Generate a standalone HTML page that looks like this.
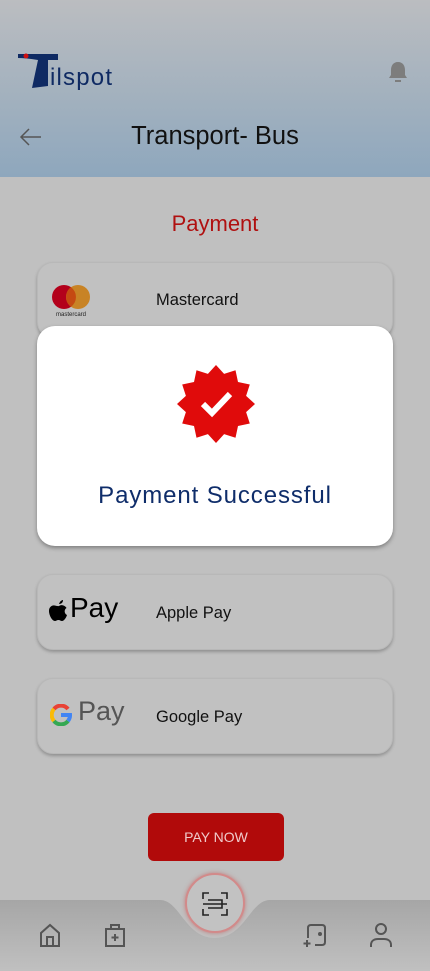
<!DOCTYPE html>
<html><head><meta charset="utf-8"><style>
*{margin:0;padding:0;box-sizing:border-box}
body{width:430px;height:971px;overflow:hidden;background:#c0c0c0;font-family:"Liberation Sans",sans-serif;position:relative}
.hdr{position:absolute;left:0;top:0;width:430px;height:177px;background:linear-gradient(#bbbdc0,#8ea7bd)}
.card{position:absolute;left:37px;width:356px;height:76px;border-radius:16px;background:#c1c1c1;box-shadow:0 2px 3px rgba(0,0,0,.25);border:1px solid #b8b8b8}
.card .t{position:absolute;left:118px;top:27px;font-size:16.5px;color:#111}
.modal{position:absolute;left:37px;top:326px;width:356px;height:220px;background:#fff;border-radius:18px;box-shadow:0 2px 4px rgba(0,0,0,.35)}
</style></head><body>
<div class="hdr"></div>
<svg style="position:absolute;left:18px;top:52px" width="100" height="38" viewBox="0 0 100 38">
<path d="M0 2 L40 2 L40 8 L30 8 L30 34 L14 36 L20 8 Q8 6 0 6Z" fill="#0f2a63"/>
<circle cx="8" cy="4" r="2.5" fill="#d01010"/>
<text x="32" y="33" font-family="Liberation Sans" font-size="24" fill="#0f2a63" textLength="62">ilspot</text>
</svg>
<svg style="position:absolute;left:387px;top:60px" width="22" height="24" viewBox="0 0 22 24"><path d="M11 2 C6 2 4 6 4 10 V15 L2 18 H20 L18 15 V10 C18 6 16 2 11 2Z M8 20 H14 V22 H8Z" fill="#7d7d7d"/></svg>
<svg style="position:absolute;left:19px;top:127px" width="24" height="20" viewBox="0 0 24 20"><path d="M22 10 H2 M10 2 L2 10 L10 18" stroke="#555" stroke-width="1.5" fill="none"/></svg>
<div style="position:absolute;left:0;width:430px;top:122px;text-align:center;font-size:25.5px;color:#111">Transport- Bus</div>
<div style="position:absolute;left:0;width:430px;top:211px;text-align:center;font-size:22px;color:#b01010">Payment</div>
<div class="card" style="top:262px">
<svg style="position:absolute;left:13px;top:22px" width="42" height="34" viewBox="0 0 42 34"><circle cx="13" cy="12" r="12" fill="#b3001b"/><circle cx="27" cy="12" r="12" fill="#c8801c" opacity=".95"/><path d="M20 2.3 A12 12 0 0 1 20 21.7 A12 12 0 0 1 20 2.3Z" fill="#c54a12"/><text x="20" y="31" font-size="6" text-anchor="middle" fill="#222">mastercard</text></svg>
<div class="t" style="top:28px">Mastercard</div></div>
<div class="modal">
<svg style="position:absolute;left:139px;top:38px" width="80" height="80" viewBox="-40 -40 80 80">
<polygon fill="#e00b0b" points="0,-39 8.1,-30.1 19.5,-33.8 22,-22 33.8,-19.5 30.1,-8.1 39,0 30.1,8.1 33.8,19.5 22,22 19.5,33.8 8.1,30.1 0,39 -8.1,30.1 -19.5,33.8 -22,22 -33.8,19.5 -30.1,8.1 -39,0 -30.1,-8.1 -33.8,-19.5 -22,-22 -19.5,-33.8 -8.1,-30.1"/>
<path d="M-13 0 L-4 9 L14 -10" stroke="#fff" stroke-width="6" fill="none"/></svg>
<div style="position:absolute;left:0;width:356px;top:156px;text-align:center;font-size:24px;color:#0f2d6a;letter-spacing:.9px">Payment Successful</div>
</div>
<div class="card" style="top:574px">
<svg style="position:absolute;left:11px;top:24px" width="20" height="23" viewBox="0 0 20 23"><path d="M10 5C11 2 13 1 14 1C14 3 13 5 10 5ZM10 7C11.5 6 13 6 14.5 6.5C16 7 17 8 17.5 9C15 10.5 15 14.5 18 16C17 19 15 22 13 22C11.5 22 11 21 9.5 21C8 21 7 22 6 22C3 22 0 16 0 12C0 8 3 6 5.5 6.5C7 6.5 8.5 7.5 10 7Z" fill="#000"/></svg>
<div style="position:absolute;left:32px;top:17px;font-size:28px;color:#000">Pay</div>
<div class="t" style="top:29px">Apple Pay</div></div>
<div class="card" style="top:678px">
<svg style="position:absolute;left:12px;top:25px" width="22" height="22" viewBox="0 0 22 22" fill="none" stroke-width="4"><path d="M18 5A9 9 0 0 0 4 5" stroke="#e94235"/><path d="M4 5A9 9 0 0 0 4 17" stroke="#fabb05"/><path d="M4 17A9 9 0 0 0 18 17" stroke="#34a853"/><path d="M18 17A9 9 0 0 0 20 11H11" stroke="#4285f4"/></svg>
<div style="position:absolute;left:40px;top:17px;font-size:27px;color:#555">Pay</div>
<div class="t" style="top:29px">Google Pay</div></div>
<div style="position:absolute;left:148px;top:813px;width:136px;height:48px;background:#b10a0a;border-radius:6px;color:#f0caca;font-size:14px;text-align:center;line-height:48px">PAY NOW</div>
<svg style="position:absolute;left:0;top:898px" width="430" height="73" viewBox="0 0 430 73"><defs><linearGradient id="g" x1="0" y1="0" x2="0" y2="1"><stop offset="0" stop-color="#a6a6a6"/><stop offset="1" stop-color="#c0c0c0"/></linearGradient></defs><path d="M0 2 H160 C180 2 185 40 215 40 C245 40 250 2 270 2 H430 V73 H0Z" fill="url(#g)"/></svg>
<div style="position:absolute;left:185px;top:873px;width:60px;height:60px;border-radius:50%;background:#c2c2c2;border:2px solid #d28a8a;box-shadow:0 0 4px rgba(200,60,60,.5)"></div>
<svg style="position:absolute;left:202px;top:892px" width="26" height="24" viewBox="0 0 26 24" fill="none" stroke="#222" stroke-width="1.6"><path d="M1 7V1H7M19 1H25V7M25 17V23H19M7 23H1V17M1 12H25M6 8H20V16H6"/></svg>
<svg style="position:absolute;left:38px;top:922px" width="24" height="26" viewBox="0 0 24 26" fill="none" stroke="#555" stroke-width="2"><path d="M3 24V11L12 3L21 11V24ZM9 24V15H15V24"/></svg>
<svg style="position:absolute;left:103px;top:922px" width="24" height="26" viewBox="0 0 24 26" fill="none" stroke="#555" stroke-width="2"><path d="M3 7H21V24H3ZM8 7V3H16V7M12 12V19M8.5 15.5H15.5"/></svg>
<svg style="position:absolute;left:303px;top:922px" width="26" height="26" viewBox="0 0 26 26" fill="none" stroke="#555" stroke-width="2"><path d="M5 16V6C5 4 6 3 8 3H19C21 3 22 4 22 6V20C22 22 21 23 19 23H12M4 18V25M0.5 21.5H7.5"/><circle cx="17" cy="12" r="1" fill="#555"/></svg>
<svg style="position:absolute;left:369px;top:922px" width="24" height="26" viewBox="0 0 24 26" fill="none" stroke="#555" stroke-width="2"><circle cx="12" cy="7" r="5"/><path d="M2 25V23C2 19 5 17 9 17H15C19 17 22 19 22 23V25"/></svg>
</body></html>
